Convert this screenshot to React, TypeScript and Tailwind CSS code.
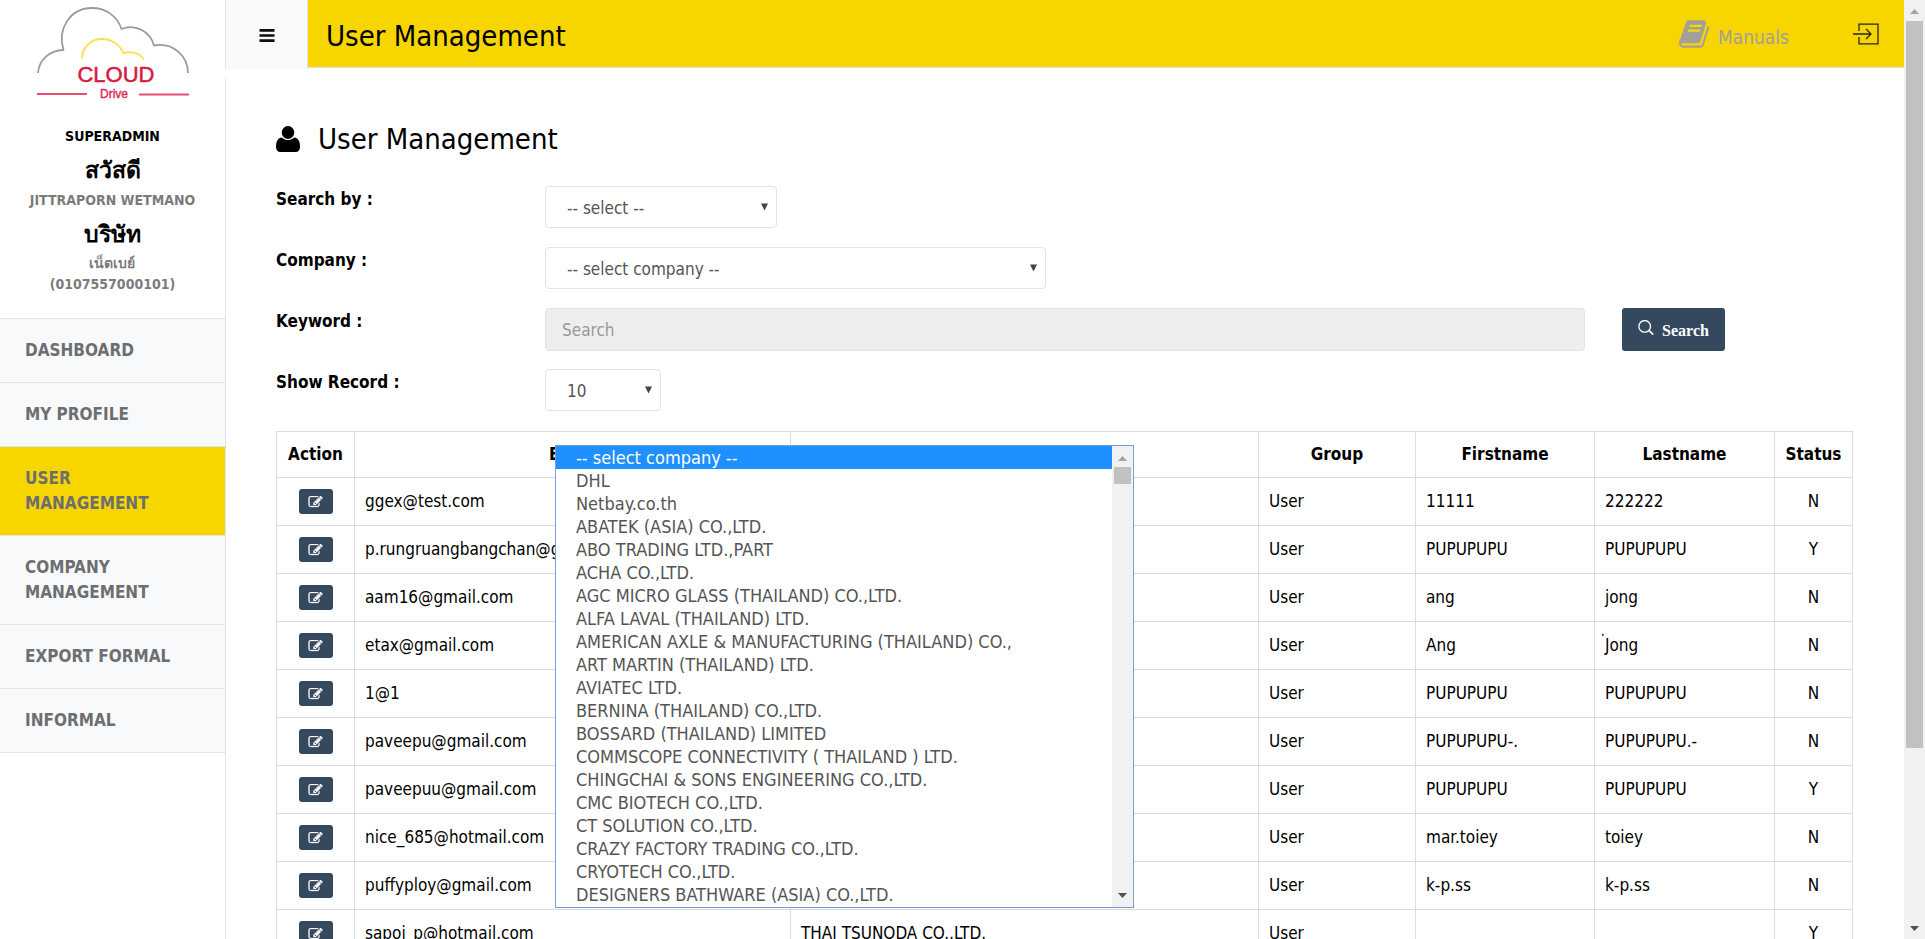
const NAV = [
  { label: "DASHBOARD" },
  { label: "MY PROFILE" },
  { label: "USER MANAGEMENT", active: true },
  { label: "COMPANY MANAGEMENT" },
  { label: "EXPORT FORMAL" },
  { label: "INFORMAL" },
];

const COMPANIES = [
  "-- select company --",
  "DHL",
  "Netbay.co.th",
  "ABATEK (ASIA) CO.,LTD.",
  "ABO TRADING LTD.,PART",
  "ACHA CO.,LTD.",
  "AGC MICRO GLASS (THAILAND) CO.,LTD.",
  "ALFA LAVAL (THAILAND) LTD.",
  "AMERICAN AXLE & MANUFACTURING (THAILAND) CO.,",
  "ART MARTIN (THAILAND) LTD.",
  "AVIATEC LTD.",
  "BERNINA (THAILAND) CO.,LTD.",
  "BOSSARD (THAILAND) LIMITED",
  "COMMSCOPE CONNECTIVITY ( THAILAND ) LTD.",
  "CHINGCHAI & SONS ENGINEERING CO.,LTD.",
  "CMC BIOTECH CO.,LTD.",
  "CT SOLUTION CO.,LTD.",
  "CRAZY FACTORY TRADING CO.,LTD.",
  "CRYOTECH CO.,LTD.",
  "DESIGNERS BATHWARE (ASIA) CO.,LTD.",
];

const USERS = [
  { email: "ggex@test.com", company: "", first: "11111", last: "222222", status: "N" },
  { email: "p.rungruangbangchan@gmail.com", company: "", first: "PUPUPUPU", last: "PUPUPUPU", status: "Y" },
  { email: "aam16@gmail.com", company: "", first: "ang", last: "jong", status: "N" },
  { email: "etax@gmail.com", company: "", first: "Ang", last: "่Jong", status: "N" },
  { email: "1@1", company: "", first: "PUPUPUPU", last: "PUPUPUPU", status: "N" },
  { email: "paveepu@gmail.com", company: "", first: "PUPUPUPU-.", last: "PUPUPUPU.-", status: "N" },
  { email: "paveepuu@gmail.com", company: "", first: "PUPUPUPU", last: "PUPUPUPU", status: "Y" },
  { email: "nice_685@hotmail.com", company: "", first: "mar.toiey", last: "toiey", status: "N" },
  { email: "puffyploy@gmail.com", company: "", first: "k-p.ss", last: "k-p.ss", status: "N" },
  { email: "sapoj_p@hotmail.com", company: "THAI TSUNODA CO.,LTD.", first: "", last: "", status: "Y" },
];

function Logo() {
  return (
    <svg viewBox="0 0 152 98" className="h-[98px] w-[152px]" fill="none" role="img" aria-label="Cloud Drive">
      <path
        d="M1 68C2 55 12 45.500 26.500 45C20 24 33 3 55 3C69 3 80 11 84.500 24C98 18.500 113 26 117 40.500C136 37 151 51 151 68"
        stroke="#9b9b9b"
        strokeWidth="1.800"
        strokeLinejoin="round"
      />
      <path d="M45 54C45 42 54 34 65 34C75 34 83 40 86.500 48.500C94 45.500 102 48 107 54.500" stroke="#fbe04c" strokeWidth="1.800" strokeLinejoin="round" />
      <text x="79" y="77" textAnchor="middle" fill="#d9183f" stroke="#d9183f" strokeWidth="0.500" fontFamily="Liberation Sans, sans-serif" fontWeight="400" fontSize="22">CLOUD</text>
      <text x="77" y="93" textAnchor="middle" fill="#dd2a50" stroke="#dd2a50" strokeWidth="0.400" fontFamily="Liberation Sans, sans-serif" fontWeight="400" fontSize="12">Drive</text>
      <path d="M0 89H50M102 89.500H152" stroke="#e84f70" strokeWidth="2" />
    </svg>
  );
}

function Caret() {
  return (
    <svg viewBox="0 0 7 8" className="pointer-events-none absolute right-[9px] top-[17px] h-2 w-[7px]" fill="#444" aria-hidden="true">
      <path d="M0 0.500H7L3.500 7.500Z" />
    </svg>
  );
}

function SelectBox({ id, value, width, options }: { id: string; value: string; width: string; options: string[] }) {
  return (
    <div className={`relative ${width}`}>
      <select
        id={id}
        defaultValue={value}
        className="h-[42px] w-full appearance-none rounded border border-[#e3e3e3] bg-white pt-[3px] pr-6 pl-[21px] text-[17px] text-[#555]"
      >
        {options.map((o) => (
          <option key={o}>{o}</option>
        ))}
      </select>
      <Caret />
    </div>
  );
}

function Arrow({ down, color }: { down?: boolean; color: string }) {
  return (
    <svg viewBox="0 0 9 5" className="h-[5px] w-[9px]" fill={color} aria-hidden="true">
      <path d={down ? "M0 0H9L4.500 5Z" : "M0 5H9L4.500 0Z"} />
    </svg>
  );
}

function CompanyMenu() {
  return (
    <div className="absolute left-[10px] top-[198px] z-10 flex w-[579px] border border-[#7a9cd8] bg-white">
      <ul role="listbox" aria-label="Company" className="flex-1 pb-px">
        {COMPANIES.map((c, i) => (
          <li
            key={c}
            role="option"
            aria-selected={i === 0}
            className={`h-[23px] pl-5 text-[18px] leading-[24px] whitespace-nowrap ${i === 0 ? "bg-[#1e90ff] text-white" : "text-[#555]"}`}
          >
            {c}
          </li>
        ))}
      </ul>
      <div className="flex w-[21px] flex-col items-center justify-between bg-[#f1f1f1] pb-[9px]">
        <div className="flex flex-col items-center">
          <div className="flex h-[21px] items-center pt-1">
            <Arrow color="#a3a3a3" />
          </div>
          <div className="h-[17px] w-[17px] bg-[#c1c1c1]" />
        </div>
        <Arrow down color="#505050" />
      </div>
    </div>
  );
}

const LABEL = "w-[269px] shrink-0 text-[17px] leading-[26px] font-bold";
const HEAD = "border border-[#dcdcdc] font-bold";
const CELL = "border border-[#dcdcdc] px-[10px]";

export default function App() {
  return (
    <div className="flex h-screen overflow-hidden bg-white font-['DejaVu_Sans_Condensed','Noto_Sans',sans-serif] text-[17px] text-black">
      <aside className="flex w-[225px] shrink-0 flex-col">
        <div className="flex h-[318px] flex-col items-center pt-[5px] text-center text-[14px] font-bold text-[#7b7b7b]">
          <Logo />
          <p className="mt-[23px] leading-[20px] text-black">SUPERADMIN</p>
          <p className="mt-[10px] text-[23px] leading-[28px] text-black">สวัสดี</p>
          <p className="mt-[6px] leading-[20px]">JITTRAPORN WETMANO</p>
          <p className="mt-[10px] text-[23px] leading-[28px] text-black">บริษัท</p>
          <p className="mt-[5px] leading-[21px]">
            เน็ตเบย์
            <br />
            (0107557000101)
          </p>
        </div>
        <nav className="border-t border-[#e2e4e7]">
          {NAV.map((n) => (
            <a
              key={n.label}
              href="#"
              className={`block border-b border-[#e2e4e7] py-[19px] pr-[40px] pl-[25px] text-[17px] leading-[25px] font-bold text-[#6d6e70] ${n.active ? "bg-[#f7d600]" : "bg-[#f8f9fb]"}`}
            >
              {n.label}
            </a>
          ))}
        </nav>
      </aside>

      <div className="flex min-w-0 flex-1 flex-col">
        <header className="flex h-[69px] shrink-0 items-start">
          <button type="button" aria-label="Toggle menu" className="flex h-[69px] w-[83px] shrink-0 items-center justify-center border-x border-[#e2e4e7] bg-[#f8f9fb] pt-[2px]">
            <svg viewBox="0 0 16 13" className="h-[13px] w-4" fill="#0b0f10" aria-hidden="true">
              <path d="M0.500 0H15.500V2.700H0.500ZM0.500 5.200H15.500V7.800H0.500ZM0.500 10.300H15.500V13H0.500Z" />
            </svg>
          </button>
          <div className="flex h-[68px] flex-1 items-center border-b border-[#e2e4e7] bg-[#f7d600] pr-[25px] pl-[18px]">
            <h1 className="flex-1 pt-[5px] text-[29px] leading-[40px]">User Management</h1>
            <a href="#" className="flex items-center gap-[9px] text-[19px] text-[#a3a09a]">
              <svg viewBox="0 0 1664 1536" className="h-[28px] w-[30px]" fill="currentColor" aria-hidden="true">
                <path d="M1639 350q40 57 18 129l-275 906q-19 64-76.500 107.500T1183 1536H260q-77 0-148.500-53.500T12 1351q-24-67-2-127 0-4 3-27t4-37q1-8-3-21.500t-3-19.500q2-11 8-21t16.500-23.500T52 1051q23-38 45-91.500t30-91.500q3-10 .5-30t-.5-28q3-11 17-28t17-23q21-36 42-92t25-90q1-9-2.500-32t.5-28q4-13 22-30.500t22-22.500q19-26 42.500-84.500T340 283q1-8-3-25.500t-2-26.500q2-8 9-18t18-23 17-21q8-12 16.500-30.500t15-35 16-36 19.500-32T469.500 12t36-11.500T553 6l-1 3q38-9 51-9h761q74 0 114 56t18 130l-274 906q-36 119-71.500 153.500T1022 1280H153q-27 0-38 15-11 16-1 43 24 70 144 70h923q29 0 56-15.500t35-41.500l300-987q7-22 5-57 38 15 59 43zm-1064 2q-4 13 2 22.500t20 9.500h608q13 0 25.500-9.500T1247 352l21-64q4-13-2-22.500t-20-9.500H638q-13 0-25.500 9.500T596 288zm-83 256q-4 13 2 22.500t20 9.500h608q13 0 25.500-9.500T1164 608l21-64q4-13-2-22.500t-20-9.500H555q-13 0-25.500 9.500T513 544z" />
              </svg>
              <span className="pt-[8px]">Manuals</span>
            </a>
            <button type="button" aria-label="Log out" className="ml-[64px]">
              <svg viewBox="0 0 26 22" className="h-[22px] w-[26px]" fill="none" stroke="#2a2610" strokeWidth="1.300" aria-hidden="true">
                <path d="M6 8V1.200H25V20.800H6V14M0 11H18M13 6L18 11L13 16" />
              </svg>
            </button>
          </div>
        </header>
        <div className="h-[9px] shrink-0" />

        <main className="min-h-0 flex-1 overflow-hidden border-l border-[#e2e4e7] pr-[51px] pl-[50px]">
          <h2 className="flex items-center gap-[18px] pt-[41px] text-[29px] leading-[40px]">
            <svg viewBox="0 0 24 26" className="h-[26px] w-6" fill="#000" aria-hidden="true">
              <ellipse cx="12" cy="6.500" rx="6.300" ry="6.500" />
              <path d="M6 11.500C8 13.300 10 14.100 12 14.100S16 13.300 18 11.500C22 11.700 24 15.500 24 20.500C24 24 22.500 26 19.500 26H4.500C1.500 26 0 24 0 20.500C0 15.500 2 11.700 6 11.500Z" />
            </svg>
            User Management
          </h2>

          <form className="mt-[27px] flex flex-col gap-[19px]" onSubmit={(e) => e.preventDefault()}>
            <div className="flex h-[42px] items-start">
              <label htmlFor="searchBy" className={LABEL}>Search by :</label>
              <SelectBox id="searchBy" value="-- select --" width="w-[232px]" options={["-- select --"]} />
            </div>
            <div className="flex h-[42px] items-start">
              <label htmlFor="company" className={LABEL}>Company :</label>
              <div className="relative w-[501px]">
                <SelectBox id="company" value="-- select company --" width="w-full" options={COMPANIES} />
                <CompanyMenu />
              </div>
            </div>
            <div className="flex h-[42px] items-start">
              <label htmlFor="keyword" className={LABEL}>Keyword :</label>
              <input
                id="keyword"
                type="text"
                placeholder="Search"
                disabled
                className="h-[43px] min-w-0 flex-1 rounded border border-[#e3e3e3] bg-[#eee] px-4 text-[17px] placeholder:text-[#999]"
              />
              <div className="ml-[37px] w-[231px]">
                <button type="submit" className="flex h-[43px] w-[103px] items-center justify-center gap-2 rounded-[3px] bg-[#34495e] font-['Liberation_Serif',serif] text-[16px] font-bold text-white">
                  <svg viewBox="0 0 16 15" className="mb-1 h-[15px] w-4" fill="none" stroke="#fff" strokeWidth="1.300" aria-hidden="true">
                    <circle cx="6.700" cy="6.400" r="5.800" />
                    <path d="M10.800 10.300L15.300 14.500" strokeWidth="1.700" />
                  </svg>
                  <span className="pt-[2px]">Search</span>
                </button>
              </div>
            </div>
            <div className="flex h-[43px] items-start">
              <label htmlFor="records" className={LABEL}>Show Record :</label>
              <SelectBox id="records" value="10" width="w-[116px]" options={["10"]} />
            </div>
          </form>

          <table className="mt-[19px] w-full table-fixed border-collapse">
            <colgroup>
              <col className="w-[78px]" />
              <col className="w-[436px]" />
              <col />
              <col className="w-[157px]" />
              <col className="w-[179px]" />
              <col className="w-[180px]" />
              <col className="w-[78px]" />
            </colgroup>
            <thead>
              <tr className="h-[46px]">
                <th className={HEAD}>Action</th>
                <th className={HEAD}>Email</th>
                <th className={HEAD}>Company</th>
                <th className={HEAD}>Group</th>
                <th className={HEAD}>Firstname</th>
                <th className={HEAD}>Lastname</th>
                <th className={HEAD}>Status</th>
              </tr>
            </thead>
            <tbody>
              {USERS.map((u) => (
                <tr key={u.email} className="h-[48px]">
                  <td className={`${CELL} text-center`}>
                    <button type="button" aria-label={`Edit ${u.email}`} className="inline-flex h-[25px] w-[34px] items-center justify-center rounded-[3px] bg-[#34495e] align-middle text-white">
                      <svg viewBox="0 0 1792 1536" className="h-[12px] w-[15px]" fill="currentColor" stroke="currentColor" strokeWidth="40" aria-hidden="true">
                        <path d="M888 1056l116-116-152-152-116 116v56h96v96h56zm440-720q-16-16-33 1L945 687q-17 17-1 33t33-1l350-350q17-17 1-33zm80 594v190q0 119-84.500 203.500T1120 1408H288q-119 0-203.500-84.500T0 1120V288Q0 169 84.500 84.500T288 0h832q63 0 117 25 15 7 18 23 3 17-9 29l-49 49q-14 14-32 8-23-6-45-6H288q-66 0-113 47t-47 113v832q0 66 47 113t113 47h832q66 0 113-47t47-113V994q0-13 9-22l64-64q15-15 35-7t20 29zm-96-738l288 288-672 672H640V864zm444 132l-92 92-288-288 92-92q28-28 68-28t68 28l152 152q28 28 28 68t-28 68z" />
                      </svg>
                    </button>
                  </td>
                  <td className={CELL}>{u.email}</td>
                  <td className={CELL}>{u.company}</td>
                  <td className={CELL}>User</td>
                  <td className={CELL}>{u.first}</td>
                  <td className={CELL}>{u.last}</td>
                  <td className={`${CELL} text-center`}>{u.status}</td>
                </tr>
              ))}
            </tbody>
          </table>
        </main>
      </div>

      <div className="flex w-[21px] shrink-0 flex-col items-center bg-[#f1f1f1]">
        <div className="flex h-[21px] items-center pt-[2px]">
          <Arrow color="#a3a3a3" />
        </div>
        <div className="w-[17px] flex-[727] bg-[#c1c1c1]" />
        <div className="flex-[170]" />
        <div className="flex h-[21px] items-center">
          <Arrow down color="#505050" />
        </div>
      </div>
    </div>
  );
}
